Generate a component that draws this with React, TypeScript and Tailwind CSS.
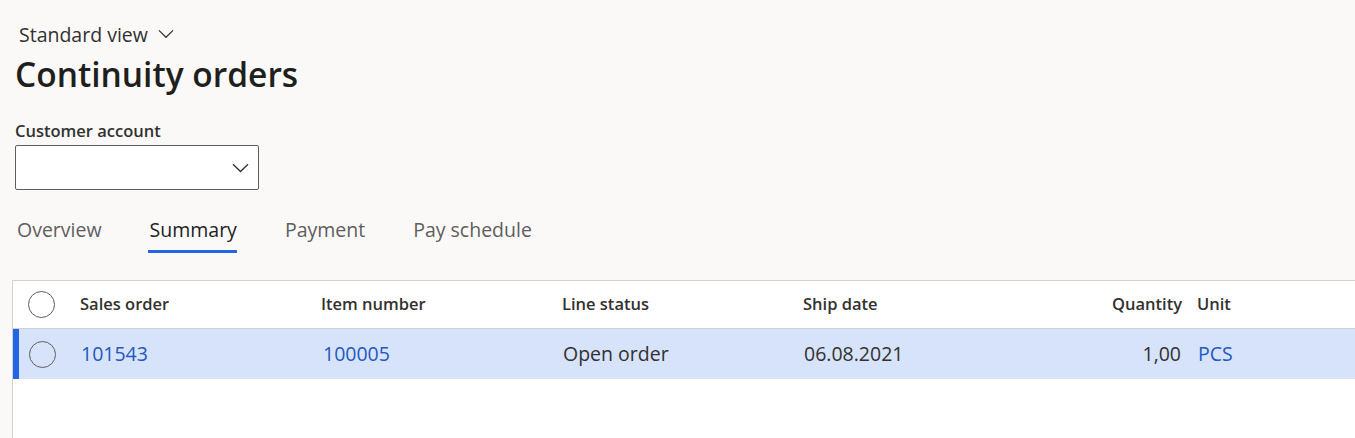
const columns = [
	{ key: 'order', label: 'Sales order' },
	{ key: 'item', label: 'Item number' },
	{ key: 'status', label: 'Line status' },
	{ key: 'date', label: 'Ship date' },
];

const tabs = ['Overview', 'Summary', 'Payment', 'Pay schedule'];

const Chevron = ({ className }: { className?: string }) => (
	<svg className={className} viewBox="0 0 17 10" fill="none">
		<polyline points="1,1.2 8.5,8.5 16,1.2" stroke="currentColor" strokeWidth="1.3" />
	</svg>
);

const Radio = () => (
	<div className="w-[27px] h-[27px] rounded-full border border-[#605e5c]" />
);

export default function App() {
	return (
		<div
			className="w-full h-[438px] bg-[#faf9f8] text-[#323130] overflow-hidden"
			style={{ fontFamily: '"Open Sans", "Noto Sans", sans-serif' }}
		>
			<div className="pl-[15px] pt-[21px]">
				<button className="flex items-center gap-[10px] pl-[4px] h-[28px] text-[19.5px] leading-[28px] text-[#323130]">
					<span>Standard view</span>
					<Chevron className="w-[16px] h-[10px] mt-[-3px]" />
				</button>
				<h1 className="mt-[3px] h-[44px] text-[33.5px] leading-[44px] font-semibold text-[#201f1e]">
					Continuity orders
				</h1>

				{/* filter */}
				<label className="block mt-[25px] h-[20px] text-[16.5px] leading-[20px] font-semibold text-[#323130]">
					Customer account
				</label>
				<div className="mt-[4px] w-[244px] h-[45px] bg-white border border-[#605e5c] rounded-[2px] flex items-center justify-end pr-[9px]">
					<Chevron className="w-[17px] h-[10px] text-[#323130]" />
				</div>

				{/* tabs */}
				<div className="mt-[26px] flex gap-[48px] pl-[2px]">
					{tabs.map((t) => (
						<div key={t} className="relative h-[38px]">
							<span
								className={`text-[19.5px] leading-[28px] ${
									t === 'Summary' ? 'text-[#201f1e]' : 'text-[#605e5c]'
								}`}
							>
								{t}
							</span>
							{t === 'Summary' && (
								<div className="absolute left-[-2px] right-0 top-[34px] h-[3px] bg-[#2266e3]" />
							)}
						</div>
					))}
				</div>
			</div>

			{/* grid */}
			<div className="ml-[12px] mt-[26px] bg-white border-t border-l border-[#d1d1d1] h-[200px]">
				<div className="flex items-center h-[48px] border-b border-[#d1d1d1] text-[16.5px] font-semibold text-[#323130]">
					<div className="w-[67px] pl-[15px]">
						<Radio />
					</div>
					{columns.map((c) => (
						<div key={c.key} className="w-[241px]">
							{c.label}
						</div>
					))}
					<div className="w-[138px] text-right">Quantity</div>
					<div className="pl-[15px]">Unit</div>
				</div>

				<div className="flex items-center h-[50px] bg-[#d6e3fa] text-[19.5px]">
					<div className="w-[6px] h-full bg-[#2266e3]" />
					<div className="w-[61px] pl-[10px]">
						<Radio />
					</div>
					<div className="w-[241px] pl-[1px] text-[#2458c0]">101543</div>
					<div className="w-[241px] pl-[2px] text-[#2458c0]">100005</div>
					<div className="w-[241px] pl-[1px] text-[#323130]">Open order</div>
					<div className="w-[241px] pl-[1px] text-[#323130]">06.08.2021</div>
					<div className="w-[137px] text-right text-[#323130]">1,00</div>
					<div className="pl-[17px] text-[#2458c0]">PCS</div>
				</div>
			</div>
		</div>
	);
}
